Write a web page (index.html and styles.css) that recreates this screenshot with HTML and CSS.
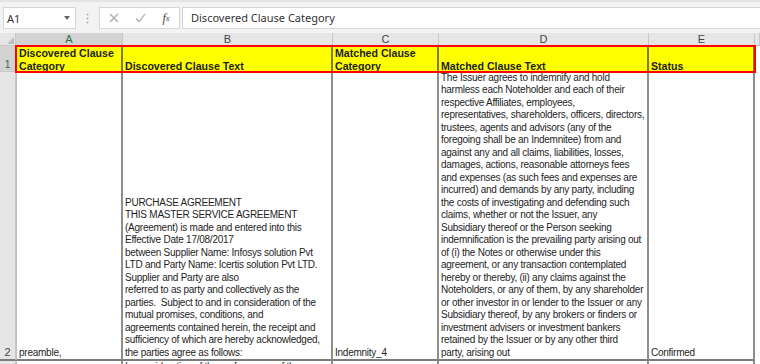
FILE: index.html
```html
<!DOCTYPE html>
<html lang="en">
<head>
    <meta charset="UTF-8">
    <meta name="viewport" content="width=device-width, initial-scale=1.0">
    <title>Clause Review</title>
    <link rel="stylesheet" href="styles.css">
</head>
<body>
    <div class="formula-bar">
        <div class="name-box">
            <span>A1</span>
            <span class="caret"></span>
        </div>
        <div class="grip">
            <svg width="3" height="11" viewBox="0 0 3 11"><circle cx="1.5" cy="1.5" r="1" fill="#b0b0b0"/><circle cx="1.5" cy="5.5" r="1" fill="#b0b0b0"/><circle cx="1.5" cy="9.5" r="1" fill="#b0b0b0"/></svg>
        </div>
        <div class="fx-tools">
            <span class="tool">
                <svg width="10" height="10" viewBox="0 0 10 10"><path d="M1 1 L9 9 M9 1 L1 9" stroke="#a9a9a9" stroke-width="1.2" fill="none"/></svg>
            </span>
            <span class="tool">
                <svg width="11" height="10" viewBox="0 0 11 10"><path d="M1 5.5 L4 8.5 L10 1" stroke="#a9a9a9" stroke-width="1.2" fill="none"/></svg>
            </span>
            <span class="tool fx"><i>f</i><sub>x</sub></span>
        </div>
        <div class="formula-input">Discovered Clause Category</div>
    </div>

    <div class="sheet">
        <!-- column letters -->
        <div class="sheet-row col-heads">
            <div class="rh corner">
                <svg width="7" height="7" viewBox="0 0 7 7"><path d="M7 0 L7 7 L0 7 Z" fill="#bdbdbd"/></svg>
            </div>
            <div class="cells">
                <div class="ch active">A</div>
                <div class="ch">B</div>
                <div class="ch">C</div>
                <div class="ch">D</div>
                <div class="ch">E</div>
            </div>
            <div class="ch tail"></div>
        </div>

        <!-- row 1: headers -->
        <div class="sheet-row row-1">
            <div class="rh active">1</div>
            <div class="cells selected">
                <div class="cell first"><div>Discovered Clause<br>Category</div></div>
                <div class="cell"><div>Discovered Clause Text</div></div>
                <div class="cell"><div>Matched Clause<br>Category</div></div>
                <div class="cell"><div>Matched Clause Text</div></div>
                <div class="cell"><div>Status</div></div>
            </div>
            <div class="tail"></div>
        </div>

        <!-- row 2: data -->
        <div class="sheet-row row-2">
            <div class="rh">2</div>
            <div class="cells">
                <div class="cell first"><div>preamble,</div></div>
                <div class="cell"><div>PURCHASE AGREEMENT<br>THIS MASTER SERVICE AGREEMENT<br>(Agreement) is made and entered into this<br>Effective Date 17/08/2017<br>between Supplier Name: Infosys solution Pvt<br>LTD and Party Name: Icertis solution Pvt LTD.<br>Supplier and Party are also<br>referred to as party and collectively as the<br>parties.&nbsp; Subject to and in consideration of the<br>mutual promises, conditions, and<br>agreements contained herein, the receipt and<br>sufficiency of which are hereby acknowledged,<br>the parties agree as follows:</div></div>
                <div class="cell"><div>Indemnity_4</div></div>
                <div class="cell"><div>The Issuer agrees to indemnify and hold<br>harmless each Noteholder and each of their<br>respective Affiliates, employees,<br>representatives, shareholders, officers, directors,<br>trustees, agents and advisors (any of the<br>foregoing shall be an Indemnitee) from and<br>against any and all claims, liabilities, losses,<br>damages, actions, reasonable attorneys fees<br>and expenses (as such fees and expenses are<br>incurred) and demands by any party, including<br>the costs of investigating and defending such<br>claims, whether or not the Issuer, any<br>Subsidiary thereof or the Person seeking<br>indemnification is the prevailing party arising out<br>of (i) the Notes or otherwise under this<br>agreement, or any transaction contemplated<br>hereby or thereby, (ii) any claims against the<br>Noteholders, or any of them, by any shareholder<br>or other investor in or lender to the Issuer or any<br>Subsidiary thereof, by any brokers or finders or<br>investment advisers or investment bankers<br>retained by the Issuer or by any other third<br>party, arising out</div></div>
                <div class="cell"><div>Confirmed</div></div>
            </div>
            <div class="tail"></div>
        </div>

        <!-- row 3: cut off -->
        <div class="sheet-row row-3">
            <div class="rh">3</div>
            <div class="cells">
                <div class="cell first"></div>
                <div class="cell"><div>In consideration of the performance of the</div></div>
                <div class="cell"></div>
                <div class="cell"></div>
                <div class="cell"></div>
            </div>
            <div class="tail"></div>
        </div>
    </div>
</body>
</html>
```

FILE: styles.css
```css
body {
    margin: 0;
    width: 760px;
    height: 364px;
    overflow: hidden;
    background: #fff;
    font-family: "Liberation Sans", Arial, sans-serif;
}

/* formula bar */
.formula-bar {
    display: flex;
    height: 33px;
    box-sizing: border-box;
    padding: 5px 0 0 3px;
    background: #f3f3f3;
    border-top: 2px solid #e4e4e4;
}
.name-box {
    width: 73px;
    height: 22px;
    box-sizing: border-box;
    border: 1px solid #d6d6d6;
    background: #fff;
    display: flex;
    align-items: center;
    justify-content: space-between;
    padding: 0 5px 0 3px;
    font-family: "Noto Sans", sans-serif;
    font-size: 11px;
    color: #333;
}
.caret {
    width: 0;
    height: 0;
    border-left: 3.5px solid transparent;
    border-right: 3.5px solid transparent;
    border-top: 4px solid #666;
}
.grip {
    width: 23px;
    height: 22px;
    display: flex;
    align-items: center;
    justify-content: center;
}
.fx-tools {
    width: 81px;
    height: 22px;
    box-sizing: border-box;
    border: 1px solid #d6d6d6;
    background: #fff;
    display: grid;
    grid-template-columns: repeat(3, 26px);
    padding-left: 1px;
    margin-right: 2px;
}
.tool {
    display: flex;
    align-items: center;
    justify-content: center;
}
.fx {
    font-family: "Liberation Serif", serif;
    font-size: 12px;
    color: #444;
}
.fx sub {
    font-size: 8px;
    font-style: italic;
    vertical-align: -1px;
}
.formula-input {
    flex: 1;
    height: 22px;
    box-sizing: border-box;
    border: 1px solid #d6d6d6;
    border-right: none;
    background: #fff;
    padding-left: 8px;
    font-family: "Noto Sans", sans-serif;
    font-size: 11px;
    line-height: 20px;
    color: #333;
}

/* sheet grid */
.sheet-row {
    display: flex;
}
.cells {
    display: grid;
    grid-template-columns: 107px 210px 106px 210px 106px;
}
.rh {
    width: 16px;
    box-sizing: border-box;
    background: #e6e6e6;
    border-right: 1px solid #c8c8c8;
    border-bottom: 1px solid #c8c8c8;
    font-size: 11px;
    color: #444;
    text-align: center;
    display: flex;
    align-items: flex-end;
    justify-content: center;
    line-height: 13px;
}
.rh.active {
    background: #d3d3d3;
    color: #3b6a57;
}
.tail {
    width: 5px;
}

.col-heads {
    height: 13px;
}
.corner {
    align-items: flex-end;
    justify-content: flex-end;
    padding: 0 1px 1px 0;
}
.ch {
    box-sizing: border-box;
    height: 13px;
    background: #e6e6e6;
    border-right: 1px solid #c8c8c8;
    border-bottom: 1px solid #bdbdbd;
    font-size: 11px;
    line-height: 12px;
    color: #444;
    text-align: center;
}
.ch.active {
    background: #d3d3d3;
    color: #2d6e4c;
}

.cell {
    box-sizing: border-box;
    display: flex;
    align-items: flex-end;
    overflow: hidden;
    padding: 0 2px;
    font-size: 10px;
    letter-spacing: -0.25px;
    line-height: 12.5px;
    color: #1e1e1e;
    white-space: nowrap;
    border-right: 2px solid #8e8e8e;
}
.cell.first {
    border-left: 1px solid #c0c0c0;
}

.row-1 {
    height: 26px;
}
.row-1 .cells {
    position: relative;
    z-index: 1;
    outline: 2px solid #ff0000;
    outline-offset: -1px;
}
.row-1 .cell {
    background: #ffff00;
    font-weight: bold;
    font-size: 10.6px;
    letter-spacing: 0;
    line-height: 12.4px;
    border-right-color: #7e7e2a;
}

.row-2 {
    height: 289px;
}
.row-2 .cell,
.row-2 .rh {
    border-bottom: 2px solid #7c7c7c;
}
.row-2 .rh {
    line-height: 14px;
}

.row-3 {
    height: 40px;
}
.row-3 .cell {
    align-items: flex-start;
}
```
